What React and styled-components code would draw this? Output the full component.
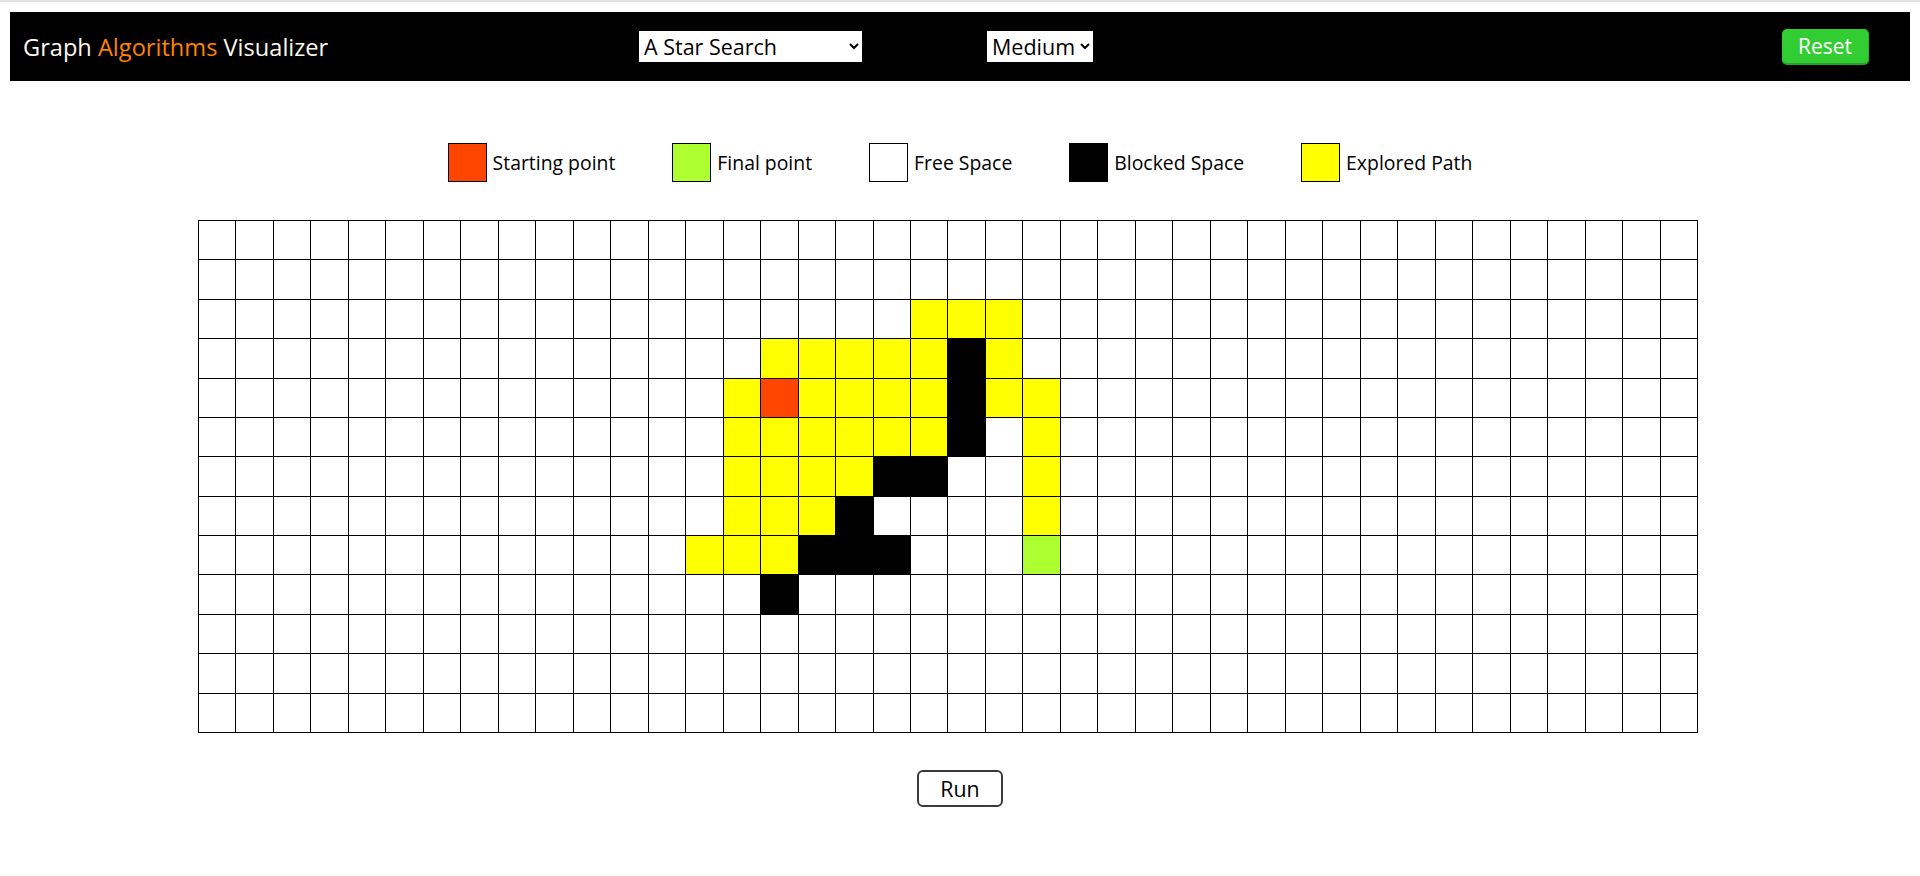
import React from "react";
import styled, { createGlobalStyle } from "styled-components";

const GlobalStyle = createGlobalStyle`
  html, body { margin: 0; padding: 0; background: #ffffff; }
  body { font-family: "Open Sans", "Noto Sans", "Liberation Sans", sans-serif; color: #000; }
  * { box-sizing: border-box; }
`;

const TopRule = styled.div`
  height: 2px;
  background: #e4e4e4;
`;

const Page = styled.div`
  padding: 10px 10px 40px;
`;

const Navbar = styled.nav`
  height: 69px;
  background: #000;
  display: flex;
  align-items: center;
  padding: 0 41px 0 13px;
`;

const Title = styled.div`
  width: 616px;
  font-size: 23.6px;
  color: #fdf8ee;
  white-space: nowrap;
`;

const Accent = styled.span`
  color: #ff8300;
`;

const Select = styled.select`
  width: ${(p) => p.$w}px;
  height: 31px;
  margin-right: ${(p) => p.$mr || 0}px;
  background: #fff;
  border: none;
  border-radius: 0;
  font-family: inherit;
  font-size: 21.5px;
  color: #000;
  padding: 0 0 0 1px;
  outline: none;
`;

const ResetButton = styled.button`
  margin-left: auto;
  width: 87px;
  height: 36px;
  background: #32cd32;
  color: #fff;
  border: none;
  border-bottom: 2px solid #27a127;
  border-right: 1px solid #2bb32b;
  border-radius: 5px;
  font-family: inherit;
  font-size: 21px;
  padding: 0;
`;

const Legend = styled.div`
  display: flex;
  justify-content: center;
  gap: 57px;
  margin-top: 62px;
`;

const LegendItem = styled.div`
  display: flex;
  align-items: center;
  gap: 6px;
`;

const Swatch = styled.span`
  width: 39px;
  height: 39px;
  background: ${(p) => p.$color};
  border: 1.5px solid #000;
`;

const LegendLabel = styled.span`
  font-size: 19.4px;
`;

const GridWrap = styled.div`
  margin-top: 38px;
  padding-left: 188px;
`;

const Board = styled.div`
  width: 1500px;
  height: 513px;
  display: grid;
  grid-template-columns: repeat(40, 1fr);
  grid-template-rows: repeat(13, 1fr);
  border-top: 1px solid #000;
  border-left: 1px solid #000;
`;

const Cell = styled.div`
  background: ${(p) => p.$color};
  border-right: 1px solid #000;
  border-bottom: 1px solid #000;
`;

const RunRow = styled.div`
  display: flex;
  justify-content: center;
  margin-top: 37px;
`;

const RunButton = styled.button`
  width: 86px;
  height: 37px;
  background: #fff;
  border: 2px solid #3a3a3a;
  border-radius: 6px;
  font-family: inherit;
  font-size: 21.3px;
  color: #000;
  padding: 0;
`;

const COLORS = {
  W: "#ffffff",
  Y: "#ffff00",
  B: "#000000",
  S: "#ff4500",
  F: "#adff2f",
};

const special = {
  2: { 19: "Y", 20: "Y", 21: "Y" },
  3: { 15: "Y", 16: "Y", 17: "Y", 18: "Y", 19: "Y", 20: "B", 21: "Y" },
  4: { 14: "Y", 15: "S", 16: "Y", 17: "Y", 18: "Y", 19: "Y", 20: "B", 21: "Y", 22: "Y" },
  5: { 14: "Y", 15: "Y", 16: "Y", 17: "Y", 18: "Y", 19: "Y", 20: "B", 22: "Y" },
  6: { 14: "Y", 15: "Y", 16: "Y", 17: "Y", 18: "B", 19: "B", 22: "Y" },
  7: { 14: "Y", 15: "Y", 16: "Y", 17: "B", 22: "Y" },
  8: { 13: "Y", 14: "Y", 15: "Y", 16: "B", 17: "B", 18: "B", 22: "F" },
  9: { 15: "B" },
};

const ROWS = 13;
const COLS = 40;

const legend = [
  { color: COLORS.S, label: "Starting point" },
  { color: COLORS.F, label: "Final point" },
  { color: COLORS.W, label: "Free Space" },
  { color: COLORS.B, label: "Blocked Space" },
  { color: COLORS.Y, label: "Explored Path" },
];

export default function App() {
  const cells = [];
  for (let r = 0; r < ROWS; r++) {
    for (let c = 0; c < COLS; c++) {
      const k = (special[r] && special[r][c]) || "W";
      cells.push(<Cell key={`${r}-${c}`} $color={COLORS[k]} />);
    }
  }
  return (
    <>
      <GlobalStyle />
      <TopRule />
      <Page>
        <Navbar>
          <Title>
            Graph <Accent>Algorithms</Accent> Visualizer
          </Title>
          <Select $w={223} $mr={125} defaultValue="astar">
            <option value="astar">A Star Search</option>
            <option value="bfs">Breadth First Search</option>
            <option value="dfs">Depth First Search</option>
            <option value="dijkstra">Dijkstra</option>
          </Select>
          <Select $w={106} defaultValue="medium">
            <option value="easy">Easy</option>
            <option value="medium">Medium</option>
            <option value="hard">Hard</option>
          </Select>
          <ResetButton>Reset</ResetButton>
        </Navbar>
        <Legend>
          {legend.map((l) => (
            <LegendItem key={l.label}>
              <Swatch $color={l.color} />
              <LegendLabel>{l.label}</LegendLabel>
            </LegendItem>
          ))}
        </Legend>
        <GridWrap>
          <Board>{cells}</Board>
        </GridWrap>
        <RunRow>
          <RunButton>Run</RunButton>
        </RunRow>
      </Page>
    </>
  );
}
